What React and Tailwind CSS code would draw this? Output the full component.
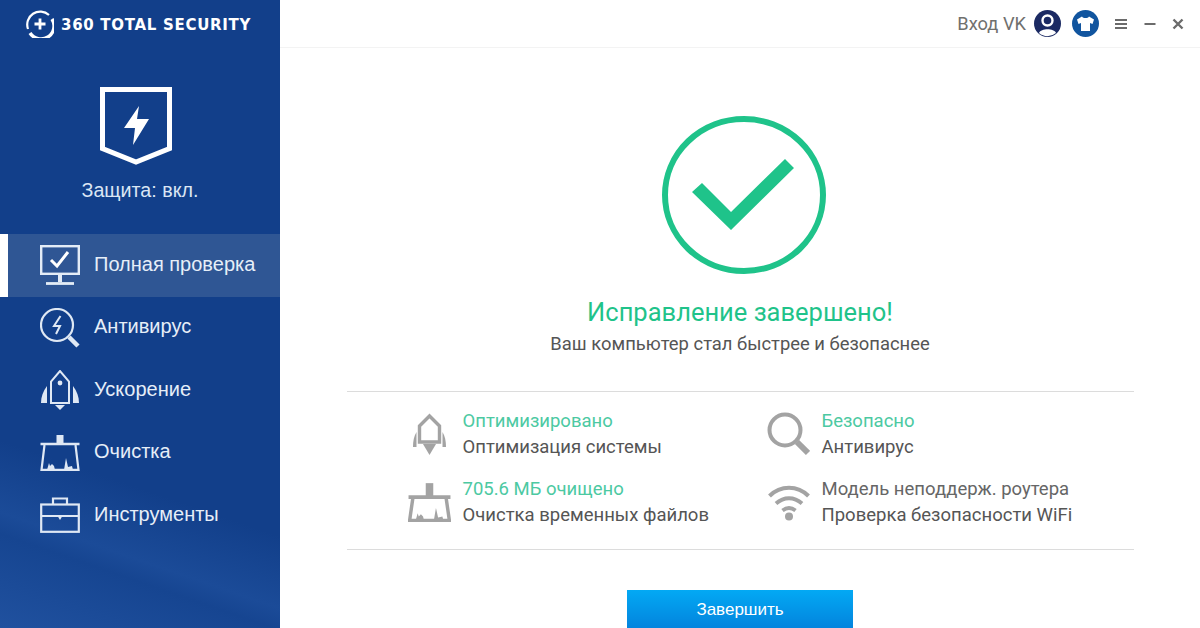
import React from "react";

const Monitor = () => (
  <svg width="40" height="40" viewBox="0 0 40 40" fill="none" stroke="#e4ecf6" strokeWidth="2.4">
    <rect x="1.2" y="1.2" width="37.600" height="27.600" />
    <path d="M11 15l6 6L28 7" strokeWidth="3" stroke="#fff" />
    <path d="M20 29v8" strokeWidth="4" />
    <path d="M6 38.500h28" strokeWidth="2.800" />
  </svg>
);
const Scan = () => (
  <svg width="40" height="40" viewBox="0 0 40 40" fill="none" stroke="#dfe8f4" strokeWidth="2.200">
    <circle cx="17" cy="17" r="16" />
    <path d="M20.500 8l-6.500 10h6l-4 8" strokeWidth="2" />
    <path d="M29 29l9 9" strokeWidth="4.500" />
  </svg>
);
const Rocket = () => (
  <svg width="40" height="40" viewBox="0 0 40 40" fill="none" stroke="#dfe8f4" strokeWidth="2">
    <path d="M11 33V11.500L20 1l9 10.500V33z" />
    <circle cx="20" cy="13" r="2.400" fill="#dfe8f4" stroke="none" />
    <path d="M7 16v17H1c0-6 2-12 6-17zM33 16v17h6c0-6-2-12-6-17z" fill="#dfe8f4" stroke="none" />
    <path d="M15 35h10l-5 5z" fill="#dfe8f4" stroke="none" />
  </svg>
);
const GreyRocket = () => (
  <svg width="33" height="43" viewBox="0 0 33 43" fill="none" stroke="#a3a3a3" strokeWidth="3.400">
    <path d="M6.500 29V13L16.500 3l10 10v16z" />
    <path d="M3.500 19v15H0c0-6 1-11 3.500-15zM29.500 19v15H33c0-6-1-11-3.500-15z" fill="#a3a3a3" stroke="none" />
    <path d="M10 31h13l-6.500 11z" fill="#a3a3a3" stroke="none" />
  </svg>
);
const Broom = ({ c = "#dfe8f4", w = 40, h = 36, sw = 2.200, bar = 9 }) => (
  <svg width={w} height={h} viewBox="0 0 40 36" fill="none" stroke={c} strokeWidth={sw}>
    <rect x="16.500" y="0" width="7" height={bar} fill={c} stroke="none" />
    <path d={`M0.500 ${bar}h39`} strokeWidth={sw + 0.400} />
    <path d={`M4.500 ${bar + 1}L1.500 34.800h37L35.500 ${bar + 1}`} strokeWidth={sw} />
    <path d="M7 35l2-7 1 3 2-2 2 2 1 4zM24 35l2-12 2 9 4-1 1 4z" fill={c} stroke="none" />
  </svg>
);
const Case = () => (
  <svg width="40" height="36" viewBox="0 0 40 36" fill="none" stroke="#dfe8f4" strokeWidth="2.200">
    <path d="M13 7V1.500h14V7" />
    <rect x="1.200" y="7.500" width="37.600" height="27.300" />
    <path d="M1.200 19h37.600" />
    <path d="M17 18h6l-3 5z" fill="#dfe8f4" stroke="none" />
  </svg>
);

const nav = [
  ["Полная проверка", <Monitor />, true],
  ["Антивирус", <Scan />, false],
  ["Ускорение", <Rocket />, false],
  ["Очистка", <Broom />, false],
  ["Инструменты", <Case />, false],
];

const Stat = ({ icon, top, bottom, topGreen = true }) => (
  <div className="flex items-center h-[50px]">
    <div className="w-[46px] flex justify-center shrink-0">{icon}</div>
    <div className="ml-[10px] text-[18.500px] leading-[26px] whitespace-nowrap">
      <div className={topGreen ? "text-[#4cc9a2]" : "text-[#666]"}>{top}</div>
      <div className="text-[#555]">{bottom}</div>
    </div>
  </div>
);

export default function App() {
  return (
    <div className="w-[1200px] h-[628px] flex overflow-hidden bg-white font-['Roboto',sans-serif]">
      <aside className="relative w-[280px] shrink-0 h-full overflow-hidden bg-[#123f8a] text-white font-['Liberation_Sans',sans-serif]">
        <div className="absolute inset-0 bg-[linear-gradient(199deg,transparent_74%,#1b4b98_84%,#164591_87%,#20519f_100%)]" />
        <div className="relative flex flex-col h-full">
          <div className="flex items-center h-[48px] pl-[26px]">
            <svg width="28" height="28" viewBox="0 0 28 28" fill="none">
              <path d="M23 5A13 13 0 0 0 2 19" stroke="#fff" strokeWidth="2.200" />
              <path d="M4 23A13 13 0 0 0 26 9" stroke="#fff" strokeWidth="3.400" />
              <path d="M14 8.500v11M8.500 14h11" stroke="#fff" strokeWidth="2.800" />
            </svg>
            <span className="ml-[7px] mt-[2px] text-[15px] font-bold tracking-[0.700px] whitespace-nowrap font-['DejaVu_Sans',sans-serif]">360 TOTAL SECURITY</span>
          </div>
          <div className="flex flex-col items-center pt-[39px] h-[186px]">
            <svg className="mr-[8px]" width="72" height="78" viewBox="0 0 72 78" fill="none">
              <path d="M2.500 2.500h67v59L36 75 2.500 61.500z" stroke="#fff" strokeWidth="5" />
              <path d="M39 19L24 41h11l-2 17 16-26H37z" fill="#fff" />
            </svg>
            <div className="mt-[13px] text-[19.700px] leading-[24px] text-[#dbe6f4]">Защита: вкл.</div>
          </div>
          <nav className="flex flex-col">
            {nav.map(([label, icon, active]) => (
              <div key={label} className={`flex items-center h-[62.500px] ${active ? "bg-[#2f5694] border-l-8 border-white pl-[32px]" : "pl-[40px]"}`}>
                <div className="w-[40px] flex justify-center">{icon}</div>
                <span className="ml-[14px] pb-[3px] text-[20px] text-[#e6eef8]">{label}</span>
              </div>
            ))}
          </nav>
        </div>
      </aside>

      <main className="flex-1 flex flex-col min-w-0">
        <header className="h-[48px] shrink-0 border-b border-[#f3f3f3] flex items-center justify-end pr-[16px] text-[#70706e]">
          <span className="text-[18.300px] mr-[8px]">Вход VK</span>
          <svg width="27" height="27" viewBox="0 0 27 27">
            <circle cx="13.500" cy="13.500" r="13.500" fill="#1b2a63" />
            <circle cx="13.500" cy="10.500" r="5" fill="none" stroke="#fff" strokeWidth="2.400" />
            <path d="M5 23c2-5 15-5 17 0a13 13 0 0 1-17 0z" fill="#fff" />
          </svg>
          <svg className="ml-[11px]" width="27" height="27" viewBox="0 0 27 27">
            <circle cx="13.500" cy="13.500" r="13.500" fill="#11559f" />
            <path d="M10 6.500l-5 3 1.500 4.500 2.500-1V21h9v-8l2.500 1L22 9.500l-5-3c-1 2-6 2-7 0z" fill="#fff" />
          </svg>
          <svg className="ml-[16px]" width="12" height="12" viewBox="0 0 12 12" fill="#6b6b6b">
            <rect y="1" width="12" height="2" /><rect y="5" width="12" height="2" /><rect y="9" width="12" height="2" />
          </svg>
          <svg className="ml-[17px]" width="12" height="12" viewBox="0 0 12 12" fill="#6b6b6b">
            <rect x="0.500" y="5" width="11" height="2" />
          </svg>
          <svg className="ml-[16px]" width="12" height="12" viewBox="0 0 12 12" stroke="#6b6b6b" strokeWidth="2.400">
            <path d="M1.500 1.500l9 9M10.500 1.500l-9 9" />
          </svg>
        </header>

        <div className="flex flex-col items-center flex-1">
          <svg className="mt-[68px] ml-[8px]" width="164" height="158" viewBox="0 0 164 158" fill="none">
            <ellipse cx="82" cy="79" rx="79" ry="76" stroke="#1fc38a" strokeWidth="6" />
            <polygon points="30,76 40,67 69,96 123,43 132,52 69,114" fill="#1fc38a" />
          </svg>
          <div className="mt-[21px] text-[25.500px] leading-[34px] text-[#1fc38a]">Исправление завершено!</div>
          <div className="mt-[3px] text-[18.400px] leading-[24px] text-[#555]">Ваш компьютер стал быстрее и безопаснее</div>

          <div className="mt-[35px] w-[787px] h-[159px] border-y border-[#dcdcdc] flex justify-start pl-[60px] pt-[17px]">
            <div className="w-[359px] flex flex-col gap-[18px]">
              <Stat icon={<GreyRocket />} top="Оптимизировано" bottom="Оптимизация системы" />
              <Stat icon={<Broom c="#a3a3a3" w={43} h={39} sw={3.200} bar={13} />} top="705.6 МБ очищено" bottom="Очистка временных файлов" />
            </div>
            <div className="flex flex-col gap-[18px]">
              <Stat
                icon={
                  <svg width="43" height="44" viewBox="0 0 43 44" fill="none" stroke="#a3a3a3">
                    <circle cx="18" cy="18" r="15.500" strokeWidth="4" />
                    <path d="M30 30l11 11" strokeWidth="6" />
                  </svg>
                }
                top="Безопасно"
                bottom="Антивирус"
              />
              <Stat
                icon={
                  <svg width="42" height="38" viewBox="0 0 42 38" fill="none" stroke="#a3a3a3" strokeWidth="4">
                    <path d="M1.500 13c11-11 28-11 39 0M8 20.500c8-7 18-7 26 0M14.500 27.500c4-3 9-3 13 0" />
                    <circle cx="21" cy="33.500" r="4" fill="#a3a3a3" stroke="none" />
                  </svg>
                }
                top="Модель неподдерж. роутера"
                bottom="Проверка безопасности WiFi"
                topGreen={false}
              />
            </div>
          </div>

          <button className="mt-[40px] w-[226px] h-[40px] shrink-0 bg-[linear-gradient(#03a9f4,#0382dc)] text-white text-[17px] font-['Liberation_Sans',sans-serif]">
            Завершить
          </button>
        </div>
      </main>
    </div>
  );
}
